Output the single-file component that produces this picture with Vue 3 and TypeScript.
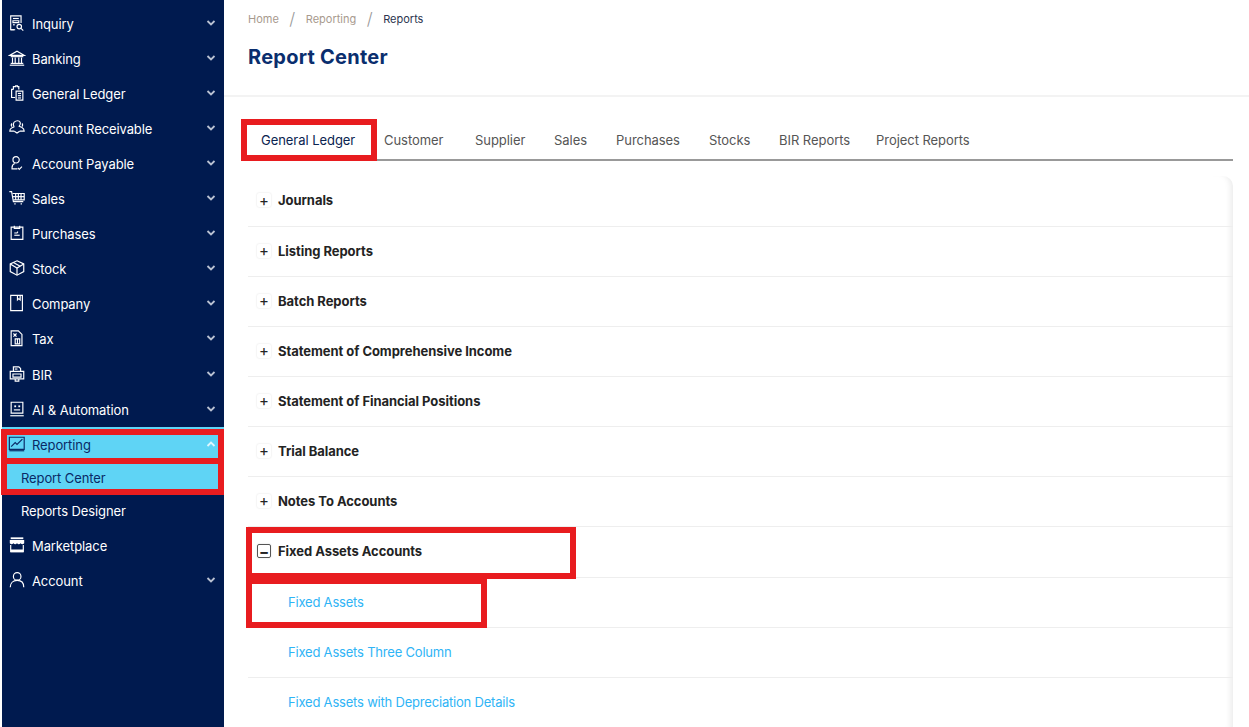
<script setup lang="ts">
interface NavItem {
  label: string
  icon: string[]
  chevron?: boolean
  active?: boolean
  sub?: boolean
  current?: boolean
  solid?: string[]
}

const nav: NavItem[] = [
  { label: 'Inquiry', chevron: true, icon: ['M14.500 10V2H3v15.500h5', 'M5.500 5h6.500', 'M5.500 7.500h6.500v2h-6.500z', 'M5.500 12h2', 'M3 17.500h4'], solid: [] },
  { label: 'Banking', chevron: true, icon: ['M2 7 10 2.500 18 7z', 'M3 8.500h14', 'M5 9.500v6', 'M8 9.500v6', 'M12 9.500v6', 'M15 9.500v6', 'M3 16h14', 'M2 18h16'] },
  { label: 'General Ledger', chevron: true, icon: ['M6 6V3h2.500V2h2v1H12v3', 'M6 6H4v9h4', 'M9 8h7.500v10H9z', 'M11 10.500h3.500', 'M11 13h3.500', 'M11 15.500h3.500'] },
  { label: 'Account Receivable', chevron: true, icon: ['M7 3.500c2-2.200 5.500-2 6.500 0 .6 1.400.2 3-1 4.500l3 1.500', 'M7 8.500C5.800 7.500 5.500 5 7 3.500', 'M7 8.500 4 10c-1.500.7-2 2.200-2 3.500h5', 'M13 13.500h5c0-2-1-3.200-2.500-4', 'M7 13.500l3 2 3-2', 'M4.500 5C3.500 6 3.600 7.600 4.500 8.500', 'M15.500 5c1 1 1 2.600 0 3.500'] },
  { label: 'Account Payable', chevron: true, icon: ['M5.500 6.500a3.500 3.500 0 1 1 7 0 3.500 3.500 0 0 1-7 0z', 'M7.500 10.500c-2 .8-3 2.200-3 4.500v1.500h6', 'M11 15.500l1.500 1.500 3-3'] },
  { label: 'Sales', chevron: true, icon: ['M1.500 3h2.500l2 11h11', 'M5 5h13v7H6', 'M8.500 5v7', 'M11.500 5v7', 'M14.500 5v7', 'M5.500 8.500h12.500', 'M7 16.500h1.500', 'M14 16.500h1.500'] },
  { label: 'Purchases', chevron: true, icon: ['M3.500 3.500h13v13.500h-13z', 'M7 2v3h6V2', 'M7 12.500h6', 'M7 10h3l1-1.500'] },
  { label: 'Stock', chevron: true, icon: ['M10 2 17.500 5.500V14L10 18 2.500 14V5.500z', 'M2.500 5.500 10 10l7.500-4.500', 'M10 10v8', 'M6 3.800 13.500 8'] },
  { label: 'Company', chevron: true, icon: ['M3 1.500h13v17H3z', 'M10.500 1.500v5l1.500-1.300 1.500 1.300v-5'] },
  { label: 'Tax', chevron: true, icon: ['M3.500 2h8l4 4v12.500h-12z', 'M6 5l3.500 3.500', 'M9.500 5 6 8.500', 'M8 11h5v5.500H8z', 'M10.500 11v5.500'] },
  { label: 'BIR', chevron: true, icon: ['M6 7V2h6l2 2v3', 'M2.500 7h15v8.500h-15z', 'M5.500 10h9v3.500h-9z', 'M8 15.500v2.500h4v-2.500', 'M7.500 4.500h3'] },
  { label: 'AI & Automation', chevron: true, icon: ['M3.500 2.500h13v12h-13z', 'M2.500 17.500h15', 'M6.500 11h7'], solid: ['M7 6h2v2H7z', 'M11.500 6h2v2h-2z'] },
  { label: 'Reporting', active: true, chevron: true, icon: ['M1.500 2.500h16.500v13.500H1.500z', 'M1.500 17.500h16.500', 'M3.500 13l4.500-4.500 2 2 6-6'] },
  { label: 'Report Center', sub: true, current: true, icon: [] },
  { label: 'Reports Designer', sub: true, icon: [] },
  { label: 'Marketplace', icon: ['M3 10v7.500h14V10'], solid: ['M3 1.500h14v2H3z', 'M2 4.500h16v3.500c-1.300 1.500-2.700 1.500-4 0-1.300 1.500-2.700 1.500-4 0-1.300 1.500-2.700 1.500-4 0-1.300 1.500-2.700 1.500-4 0z', 'M3 15h14v3H3z'] },
  { label: 'Account', chevron: true, icon: ['M6 6a4.200 4.200 0 1 1 8.400 0A4.200 4.200 0 0 1 6 6z', 'M2.500 18c0-4.500 3-7.500 7.700-7.500s7.300 3 7.300 7.500'] },
]

const tabs = ['General Ledger', 'Customer', 'Supplier', 'Sales', 'Purchases', 'Stocks', 'BIR Reports', 'Project Reports']

const groups = [
  'Journals',
  'Listing Reports',
  'Batch Reports',
  'Statement of Comprehensive Income',
  'Statement of Financial Positions',
  'Trial Balance',
  'Notes To Accounts',
]

const links = ['Fixed Assets', 'Fixed Assets Three Column', 'Fixed Assets with Depreciation Details']
</script>

<template>
  <div class="page">
    <aside class="sidebar">
      <div
        v-for="item in nav"
        :key="item.label"
        class="nav-item"
        :class="{ active: item.active, sub: item.sub, current: item.current, bir: item.label === 'BIR' }"
      >
        <svg v-if="!item.sub" class="nav-icon" viewBox="0 0 20 20" aria-hidden="true">
          <path v-for="d in item.solid" :key="d" :d="d" class="solid" />
          <path v-for="d in item.icon" :key="d" :d="d" />
          <template v-if="item.label === 'Inquiry'">
            <circle cx="12.500" cy="14" r="2.500" />
            <path d="m14.500 16 2.500 2.500" />
          </template>
        </svg>
        <span class="nav-label">{{ item.label }}</span>
        <svg v-if="item.chevron" class="chevron" viewBox="0 0 10 10" aria-hidden="true">
          <path :d="item.active ? 'M1.500 7 5 3.500 8.500 7' : 'M1.500 3 5 6.500 8.500 3'" />
        </svg>
      </div>
    </aside>

    <main class="main">
      <header class="page-head">
        <nav class="crumbs">
          <span class="crumb">Home</span>
          <span class="sep">/</span>
          <span class="crumb">Reporting</span>
          <span class="sep">/</span>
          <span class="crumb last">Reports</span>
        </nav>
        <h1 class="title">Report Center</h1>
      </header>

      <section class="content">
        <div class="tabs">
          <div v-for="(t, i) in tabs" :key="t" class="tab" :class="{ on: i === 0 }">{{ t }}</div>
        </div>

        <div class="card">
          <div v-for="g in groups" :key="g" class="row group">
            <span class="box">+</span>
            <span>{{ g }}</span>
          </div>
          <div class="row group open">
            <span class="box minus">−</span>
            <span>Fixed Assets Accounts</span>
          </div>
          <div v-for="l in links" :key="l" class="row link">{{ l }}</div>
        </div>
      </section>
    </main>

    <div class="mark m-reporting"></div>
    <div class="mark m-center"></div>
    <div class="mark m-tab"></div>
    <div class="mark m-group"></div>
    <div class="mark m-link"></div>
  </div>
</template>

<style>
html,
body {
  margin: 0;
  background: #fff;
  overflow: hidden;
}
</style>

<style scoped>
.page {
  position: relative;
  display: flex;
  height: 727px;
  width: 1249px;
  overflow: hidden;
  font-family: Inter, "Noto Sans", sans-serif;
  background: #fff;
}

.sidebar {
  width: 222px;
  margin-left: 2px;
  flex: none;
  box-sizing: border-box;
  padding-top: 6px;
  background: #001a4f;
  color: #fff;
}

.nav-item {
  display: flex;
  align-items: center;
  height: 35px;
  padding: 0 8px 0 6px;
  font-size: 13px;
  letter-spacing: -0.1px;
}

.nav-item.bir {
  margin-top: 1px;
}

.nav-icon {
  width: 18px;
  height: 18px;
  flex: none;
  margin-right: 6px;
  transform: translateY(-1px);
  fill: none;
  stroke: #fff;
  stroke-width: 1.300;
}

.nav-icon .solid {
  fill: #fff;
  stroke: none;
}

.nav-label {
  flex: 1;
}

.chevron {
  width: 10px;
  height: 10px;
  transform: translateY(-1px);
  fill: none;
  stroke: #b9c1d2;
  stroke-width: 1.800;
}

.nav-item.active {
  background: #5fd4f5;
  color: #0a2a66;
}

.nav-item.active .nav-icon {
  stroke: #0a2a66;
}

.nav-item.active .chevron {
  stroke: #dff6fd;
}

.nav-item.sub {
  height: 33px;
  padding-left: 19px;
  padding-bottom: 2px;
  box-sizing: border-box;
}

.nav-item.current {
  background: #5fd4f5;
  color: #0a2a66;
}

.main {
  flex: 1;
  min-width: 0;
}

.page-head {
  height: 97px;
  box-sizing: border-box;
  padding: 11px 0 0 24px;
  border-bottom: 2px solid #f3f3f3;
}

.crumbs {
  display: flex;
  align-items: center;
  height: 15px;
  font-size: 11px;
  color: #a89a8e;
}

.sep {
  margin: 0 10.500px;
  font-size: 17px;
  font-weight: 300;
  color: #999;
}

.crumb.last {
  color: #2c3550;
}

.title {
  margin: 19px 0 0;
  font-size: 20px;
  font-weight: 700;
  line-height: 24px;
  letter-spacing: 0.25px;
  color: #0a2e6e;
}

.content {
  padding: 21px 16px 0 23px;
}

.tabs {
  display: grid;
  grid-template-columns: 122px 91px 79px 62px 93px 70px 97px 120px;
  height: 41px;
  border-bottom: 2px solid #999;
  font-size: 13px;
  letter-spacing: -0.05px;
  color: #555;
}

.tab {
  display: flex;
  align-items: center;
  padding: 2px 0 0 15px;
}

.tab.on {
  padding-left: 14px;
  color: #0a2350;
}

.card {
  margin: 15px 0 0 1px;
  border-radius: 10px 10px 0 0;
  box-shadow: inset -7px 0 6px -5px rgba(0, 0, 0, 0.09);
}

.row {
  box-sizing: border-box;
  display: flex;
  align-items: center;
  height: 50px;
  padding-bottom: 2px;
  border-bottom: 1px solid #eee;
  font-size: 13px;
}

.row:first-child {
  height: 51px;
}

.group {
  font-weight: 700;
  letter-spacing: -0.05px;
  color: #232323;
  padding-left: 9px;
}

.group.open {
  height: 51px;
}

.box {
  display: flex;
  align-items: center;
  justify-content: center;
  width: 14px;
  height: 14px;
  margin-right: 7px;
  font-size: 15px;
  font-weight: 400;
  border-radius: 2px;
  box-shadow: 0 0 2px rgba(0, 0, 0, 0.14);
}

.box.minus {
  box-sizing: border-box;
  border: 1px solid #555;
  font-weight: 700;
}

.link {
  padding-left: 40px;
  color: #2fb4f6;
  font-weight: 400;
  letter-spacing: -0.2px;
}

.mark {
  position: absolute;
  box-sizing: border-box;
  border: 6px solid #e81c1f;
  pointer-events: none;
}

.m-reporting {
  left: 1px;
  top: 429px;
  width: 223px;
  height: 35px;
}

.m-center {
  left: 1px;
  top: 458px;
  width: 223px;
  height: 37px;
}

.m-tab {
  left: 241px;
  top: 119px;
  width: 136px;
  height: 42px;
}

.m-group {
  left: 246px;
  top: 527px;
  width: 330px;
  height: 52px;
}

.m-link {
  left: 246px;
  top: 578px;
  width: 241px;
  height: 50px;
}
</style>
